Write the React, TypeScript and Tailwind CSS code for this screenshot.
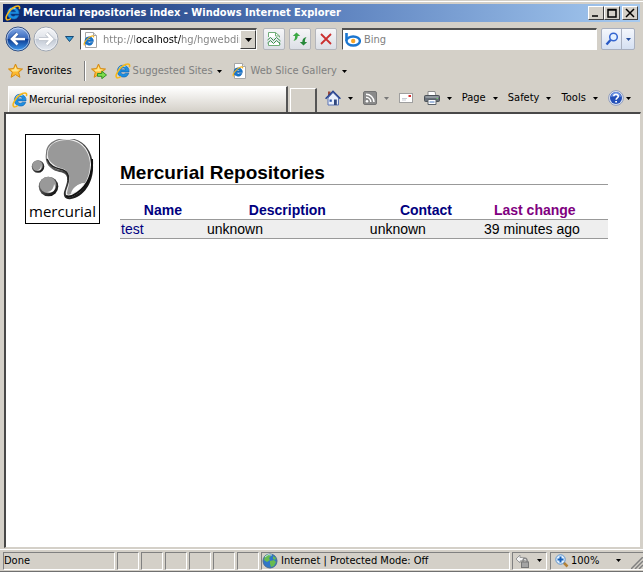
import React from 'react';

const ui = "font-['DejaVu_Sans_Condensed','DejaVu_Sans',sans-serif]";

function Caret({ className = 'text-black' }: { className?: string }) {
  return (
    <svg viewBox="0 0 5 3" className={`h-[3px] w-[5px] shrink-0 ${className}`} aria-hidden="true">
      <path d="M0 0h5L2.500 3z" fill="currentColor" />
    </svg>
  );
}

function IELogo({ className = 'size-4' }: { className?: string }) {
  return (
    <svg viewBox="0 0 16 16" className={`shrink-0 ${className}`} aria-hidden="true">
      <path
        d="M8.200 2.200a5.900 5.900 0 1 0 5.600 8h-3.500c-1.300 1.700-4.300 1-4.500-1.300h8.300A6 6 0 0 0 8.200 2.200zM5.900 6.800c.4-2.400 4.300-2.500 4.700 0z"
        fill="#1d8fe0"
        stroke="#0c5cb0"
        strokeWidth=".6"
        fillRule="evenodd"
      />
      <path d="M4 5.600C5.300 3.600 8 2.800 10.500 3.500" fill="none" stroke="#8fdcff" strokeWidth="1.100" />
      <path
        d="M1.900 14.700C-.8 12.600 4.400 4.200 10.500 1.600c2.800-1.200 4.600-.6 4 1.900"
        fill="none"
        stroke="#f5b81c"
        strokeWidth="1.600"
        strokeLinecap="round"
      />
      <path d="M1.900 14.700c1 .5 2.500-.2 4-1.300" fill="none" stroke="#f5b81c" strokeWidth="1.200" />
    </svg>
  );
}

function IEPage() {
  return (
    <svg viewBox="0 0 16 16" className="size-4 shrink-0" aria-hidden="true">
      <path d="M2.500.5h8l3 3v12h-11z" fill="#fff" stroke="#a6a6a6" />
      <path d="M10.500.5v3h3" fill="#e4e4e4" stroke="#a6a6a6" />
      <path
        d="M6 4.800a4.200 4.200 0 1 0 4 5.700H7.600c-1 1-2.800.5-2.900-.9h5.700A4.200 4.200 0 0 0 6 4.800zM4.700 8.100c.3-1.500 2.700-1.600 3 0z"
        fill="#1677cf"
        stroke="#0b57a5"
        strokeWidth=".5"
        fillRule="evenodd"
      />
      <path d="M1.500 13.400C0 11.500 4 6 8.200 4.200c1.600-.6 2.800-.2 2.300 1.200" fill="none" stroke="#f2b21b" strokeWidth="1.200" />
    </svg>
  );
}

function Star({ arrow = false }: { arrow?: boolean }) {
  return (
    <svg viewBox="0 0 16 16" className="size-4 shrink-0" aria-hidden="true">
      <path
        d="M7.500 1l2 4.600 5 .4-3.800 3.300 1.200 5-4.400-2.700-4.400 2.700 1.200-5L.5 6l5-.4z"
        fill="#fcb92f"
        stroke="#d58a12"
        strokeLinejoin="round"
      />
      <path d="M7.500 3l1.300 3.300 3.200.3-2.700 2-4.600-.2L3 6.700l3.200-.4z" fill="#ffe58c" />
      {arrow && (
        <path d="M6.500 10.500h4.300V8.200L15.500 12l-4.700 3.700v-2.400H6.500z" fill="#7ddc4c" stroke="#278c22" strokeWidth=".9" />
      )}
    </svg>
  );
}

function Round({ forward = false }: { forward?: boolean }) {
  return (
    <button aria-label={forward ? 'Forward' : 'Back'} className="shrink-0">
      <svg viewBox="0 0 26 26" className="size-[26px]">
        <defs>
          <linearGradient id={forward ? 'fwd' : 'back'} x1="0" y1="0" x2="0" y2="1">
            <stop offset="0" stopColor={forward ? '#f7f8fa' : '#8cafe8'} />
            <stop offset=".48" stopColor={forward ? '#dfe3e9' : '#3668bd'} />
            <stop offset=".52" stopColor={forward ? '#c3cad5' : '#0d3d94'} />
            <stop offset="1" stopColor={forward ? '#e9edf3' : '#3f9cf2'} />
          </linearGradient>
        </defs>
        <circle cx="13" cy="13" r="12" fill={`url(#${forward ? 'fwd' : 'back'})`} stroke={forward ? '#9da5b1' : '#334e80'} />
        <circle cx="13" cy="13" r="11" fill="none" stroke="#fff" strokeOpacity=".5" />
        <path
          d={forward ? 'M6 13h13M13.500 7.500L19 13l-5.500 5.500' : 'M20 13H7M12.500 7.500L7 13l5.500 5.500'}
          fill="none"
          stroke={forward ? '#b2b9c3' : '#244f9a'}
          strokeWidth="4"
        />
        <path
          d={forward ? 'M6 13h13M13.500 7.500L19 13l-5.500 5.500' : 'M20 13H7M12.500 7.500L7 13l5.500 5.500'}
          fill="none"
          stroke="#fff"
          strokeWidth="2.600"
        />
      </svg>
    </button>
  );
}

function NavButton({ label, children }: { label: string; children: React.ReactNode }) {
  return (
    <button
      aria-label={label}
      className="flex size-[22px] shrink-0 items-center justify-center rounded-[2px] border border-[#b4b6bb] bg-linear-to-b from-[#f6f6f8] to-[#dcdfe6]"
    >
      {children}
    </button>
  );
}

function CaptionButton({ label, d, gap = false }: { label: string; d: string; gap?: boolean }) {
  return (
    <button
      aria-label={label}
      className={`flex h-3.5 w-4 items-center justify-center border border-t-white border-r-[#404040] border-b-[#404040] border-l-white bg-[#d4d0c8] ${gap ? 'ml-0.5' : ''}`}
    >
      <svg viewBox="0 0 10 10" className="size-2.5 shrink-0">
        <path d={d} fill="none" stroke="#000" strokeWidth="1.500" />
      </svg>
    </button>
  );
}

function Pane({ className = '', children }: { className?: string; children?: React.ReactNode }) {
  return (
    <div
      className={`flex h-[18px] items-center border border-t-[#808080] border-r-white border-b-white border-l-[#808080] ${className}`}
    >
      {children}
    </div>
  );
}

function HomeIcon() {
  return (
    <svg viewBox="0 0 16 16" className="size-4" aria-hidden="true">
      <path d="M3 1.500h2.500V5H3z" fill="#9b4a3c" />
      <path d="M3 8l5-5.500L13.500 8v7H3z" fill="#e9effb" stroke="#5873b5" />
      <path d="M.6 8.700L8 1.200l7.400 7.500" fill="none" stroke="#24408f" strokeWidth="1.500" />
      <path d="M4.500 9.500h2.300v2.300H4.500z" fill="#2d55a8" />
      <path d="M9 9.500h2.800V15H9z" fill="#30477d" />
    </svg>
  );
}

function FeedIcon() {
  return (
    <svg viewBox="0 0 14 14" className="size-3.5" aria-hidden="true">
      <rect x=".5" y=".5" width="13" height="13" rx="1.500" fill="#8a8a8a" stroke="#747474" />
      <circle cx="4" cy="10.200" r="1.300" fill="#fff" />
      <path d="M3 6.300A4.800 4.800 0 0 1 7.800 11M3 3.200a8 8 0 0 1 8 7.800" fill="none" stroke="#fff" strokeWidth="1.500" />
    </svg>
  );
}

function MailIcon() {
  return (
    <svg viewBox="0 0 14 10" className="h-2.5 w-3.5" aria-hidden="true">
      <rect x=".5" y=".5" width="13" height="9" fill="#fff" stroke="#9f9f9f" />
      <path d="M9.500 2h2.500v2H9.500z" fill="#d42e2e" />
      <path d="M3 5.500h5M3 7h4" stroke="#c9ccd4" />
    </svg>
  );
}

function PrintIcon() {
  return (
    <svg viewBox="0 0 16 16" className="size-4" aria-hidden="true">
      <path d="M4 1.500h7l1 4.500H4z" fill="#fff" stroke="#8d8d8d" />
      <rect x=".5" y="5.500" width="15" height="6" rx="1" fill="#687079" stroke="#4a5057" />
      <path d="M1.500 7h13" stroke="#bcc2c8" />
      <path d="M4 9.500h8v5H4z" fill="#fff" stroke="#5a626b" />
      <path d="M5.500 12h5" stroke="#4a78bd" />
      <path d="M12.500 8.500h1.500" stroke="#6fd06f" />
    </svg>
  );
}

function HelpIcon() {
  return (
    <svg viewBox="0 0 16 16" className="size-4" aria-hidden="true">
      <circle cx="8" cy="8" r="7.400" fill="#dfe6f4" stroke="#8f9cbb" />
      <circle cx="8" cy="8" r="6" fill="#2450b8" />
      <path d="M3 7a5 5 0 0 1 10 0c-3-1.500-7-1.500-10 0z" fill="#6c92e2" />
      <path d="M5.800 6.300c0-2.800 4.600-2.700 4.500 0C10.300 7.900 8.100 7.800 8.100 9.700" fill="none" stroke="#fff" strokeWidth="1.600" />
      <path d="M7.200 10.900H9v1.600H7.200z" fill="#fff" />
    </svg>
  );
}

function MercurialMark() {
  return (
    <svg viewBox="0 0 70 64" className="h-16 w-[70px]" aria-hidden="true">
      <defs>
        <linearGradient id="rim" x1="0" y1="0" x2="1" y2="1">
          <stop offset="0" stopColor="#888" />
          <stop offset=".5" stopColor="#444" />
          <stop offset="1" stopColor="#000" />
        </linearGradient>
      </defs>
      <path
        d="M18 14C18 4 28-1 39-1 54-1 64 10 65 26 66 43 56 58 43 60 38 61 35 58 36 53 38 46 41 41 38 36 35 32 28 34 23 29 18 25 17 20 18 14z"
        fill="url(#rim)"
      />
      <path
        d="M19 15C19 6 28 0 39 0 53 0 62 10 63 25 64 41 55 54 43 58 39 59 37 56 38 52 40 46 43 40 40 35 36 30 29 32 24 27 20 24 18 20 19 15z"
        fill="#eee"
      />
      <path
        d="M20 13C21 5 29 1 39 1 51 1 61 10 62 24 62 33 60 39 57 44 52 44 47 47 45 52 43 56 39 57 39 54 40 48 43 41 40 34 37 28 30 30 25 25 21 22 19 18 20 13z"
        fill="#999"
      />
      <path d="M43 54c2-6 7-9 13-10-3 6-7 9-13 10z" fill="#fff" />
      <path d="M64 20c1 14-4 27-15 34-4 3-8 4-11 3" fill="none" stroke="#111" strokeWidth="2" />
      <path d="M19 20c3 8 9 9 16 11 5 2 6 6 5 10" fill="none" stroke="#222" strokeWidth="1.500" />
      <circle cx="10" cy="27.500" r="6.300" fill="url(#rim)" />
      <circle cx="9.500" cy="26.700" r="5.200" fill="#999" />
      <path d="M9 31c3 0 4-2 4-5 1 4-1 6-4 5z" fill="#fff" />
      <circle cx="20.500" cy="47.500" r="9.800" fill="url(#rim)" />
      <circle cx="20" cy="46" r="8.300" fill="#999" />
      <path d="M19 53c5 0 7-5 7-8 3 5-1 10-7 8z" fill="#fff" />
    </svg>
  );
}

function CommandMenu({ label, icon, muted = false }: { label: string; icon?: React.ReactNode; muted?: boolean }) {
  return (
    <button aria-label={label} className="flex items-center gap-[7px]">
      {icon ?? <span>{label}</span>}
      <Caret className={muted ? 'text-[#777]' : 'text-black'} />
    </button>
  );
}

export default function App() {
  return (
    <div
      className={`flex h-screen flex-col overflow-hidden border-b border-[#707070] bg-[#d4d0c8] text-[11px] leading-4 whitespace-nowrap text-black ${ui}`}
    >
      <header>
        <div className="h-1 border-t border-[#d4d0c8]">
          <div className="h-px bg-white" />
        </div>
        <div className="mx-[3px] flex h-[18px] items-center gap-0.5 bg-linear-to-r from-[#0a246a] via-[#5b80bd] via-50% to-[#a6caf0] pr-0.5 pl-0.5">
          <IELogo />
          <h1 className="flex-1 font-bold text-white">Mercurial repositories index - Windows Internet Explorer</h1>
          <div className="flex">
            <CaptionButton label="Minimize" d="M1 8h6" />
            <CaptionButton label="Maximize" d="M1 1.500h8v7.500H1zM1 2h8" />
            <CaptionButton label="Close" d="M1 1l8 8M9 1L1 9" gap />
          </div>
        </div>

        <div className="flex h-[34px] items-center pr-2 pl-[5px]">
          <div className="flex gap-0.5">
            <Round />
            <Round forward />
          </div>
          <button aria-label="Recent pages" className="ml-0.5 flex w-4 justify-center">
            <svg viewBox="0 0 9 6" className="h-1.5 w-[9px]">
              <path d="M.5.5h8L4.500 5.500z" fill="#359bd5" stroke="#164a78" />
            </svg>
          </button>
          <div className="ml-[3px] flex h-[22px] w-[177px] items-center border border-t-2 border-t-[#505050] border-r-white border-b-white border-l-[#505050] bg-white pl-0.5">
            <IEPage />
            <input
              aria-label="Address"
              readOnly
              value="http://localhost/hg/hgwebdir.cgi"
              className="ml-1 min-w-0 flex-1 bg-[linear-gradient(90deg,#808080_33px,#000_33px,#000_78px,#808080_78px)] bg-clip-text text-transparent outline-none"
            />
            <button
              aria-label="Show address history"
              className="flex h-full w-4 items-center justify-center border border-t-white border-r-[#404040] border-b-[#404040] border-l-white bg-[#d4d0c8]"
            >
              <svg viewBox="0 0 7 4" className="h-1 w-[7px]">
                <path d="M0 0h7L3.500 4z" />
              </svg>
            </button>
          </div>
          <div className="ml-1.5 flex gap-1">
            <NavButton label="Compatibility view">
              <svg viewBox="0 0 14 16" className="h-4 w-3.5">
                <path d="M1.500 6V1.500h7l4 3.500v1.500M1.500 12v2.500h11V11" fill="#fff" stroke="#70ad78" />
                <path d="M8.500 1.500V5h4" fill="none" stroke="#70ad78" />
                <path d="M.5 9l3-2.500 3 3 3-3 4 3.500M.5 12l3-2.500 3 3 3-3 4 3.500" fill="none" stroke="#36914a" />
              </svg>
            </NavButton>
            <NavButton label="Refresh">
              <svg viewBox="0 0 16 16" className="size-4">
                <path d="M4.500 10L.8 6.500h2.500C3.300 4 4.500 2.200 7.500 1.500 6.300 3 5.900 4.500 5.900 6.500h2.300z" fill="#3ca944" transform="rotate(180 4.500 5.750)" />
                <path d="M4.500 10L.8 6.500h2.500C3.300 4 4.500 2.200 7.500 1.500 6.300 3 5.900 4.500 5.900 6.500h2.300z" fill="#26883a" transform="translate(7 4.500)" />
              </svg>
            </NavButton>
            <NavButton label="Stop">
              <svg viewBox="0 0 12 12" className="size-3">
                <path d="M1 1l10 10M11 1L1 11" fill="none" stroke="#cb3030" strokeWidth="1.800" />
              </svg>
            </NavButton>
          </div>
          <div className="ml-[5px] flex h-[22px] min-w-0 flex-1 items-center border border-t-2 border-t-[#505050] border-r-white border-b-white border-l-[#505050] bg-white pl-0.5">
            <svg viewBox="0 0 16 16" className="size-4 shrink-0" aria-hidden="true">
              <path d="M1.500 1v8" fill="none" stroke="#1b76d0" strokeWidth="2.600" />
              <ellipse cx="8.200" cy="9" rx="6.700" ry="4.500" fill="#fff" stroke="#1b76d0" strokeWidth="2.400" />
              <circle cx="8.200" cy="9" r="2.200" fill="#f7a526" />
            </svg>
            <input
              aria-label="Search"
              placeholder="Bing"
              className="ml-[3px] min-w-0 flex-1 outline-none placeholder:text-[#808080] placeholder:opacity-100"
            />
          </div>
          <div className="ml-1 flex h-[22px] rounded-[2px] border border-[#a9b0bf] bg-linear-to-b from-[#f4f7fc] to-[#d5e0f2]">
            <button aria-label="Search the web" className="flex w-5 items-center justify-center border-r border-[#a9b0bf]">
              <svg viewBox="0 0 14 14" className="size-3.5">
                <path d="M1.500 12.500l4-4.500" stroke="#2758c5" strokeWidth="2.300" />
                <circle cx="8.500" cy="5" r="3.800" fill="#e3f1ff" stroke="#3566d0" strokeWidth="1.500" />
              </svg>
            </button>
            <button aria-label="Search options" className="flex w-3 items-center justify-center">
              <Caret className="text-[#28509e]" />
            </button>
          </div>
        </div>

        <nav aria-label="Favorites bar" className="flex h-[30px] items-center pl-2">
          <button className="flex items-center gap-[3px]">
            <Star />
            Favorites
          </button>
          <div className="mr-[5px] ml-3 h-5 border-r border-l border-r-white border-l-[#808080]" />
          <button aria-label="Add to favorites bar">
            <Star arrow />
          </button>
          <button className="ml-2 flex items-center gap-0.5 text-[#808080]">
            <IELogo />
            Suggested Sites
            <Caret className="ml-0.5 text-black" />
          </button>
          <button className="ml-2.5 flex items-center gap-[3px] text-[#808080]">
            <IEPage />
            Web Slice Gallery
            <Caret className="ml-0.5 text-black" />
          </button>
        </nav>

        <div className="flex h-[26px] items-end pr-3 pl-2">
          <div
            role="tab"
            aria-selected="true"
            className="flex h-[26px] w-[280px] items-center gap-px border-t border-r-2 border-l border-t-white border-r-[#555] border-l-white bg-linear-to-b from-white to-[#d4d0c8] pl-[3px]"
          >
            <IELogo />
            <span>Mercurial repositories index</span>
          </div>
          <button
            aria-label="New tab"
            className="ml-0.5 h-6 w-[27px] border-t border-r-2 border-l border-t-white border-r-[#555] border-l-white"
          />
          <div className="flex h-full flex-1 items-center justify-between pb-0.5 pl-2">
            <CommandMenu label="Home" icon={<HomeIcon />} />
            <CommandMenu label="Feeds" icon={<FeedIcon />} muted />
            <button aria-label="Read mail">
              <MailIcon />
            </button>
            <CommandMenu label="Print" icon={<PrintIcon />} />
            <CommandMenu label="Page" />
            <CommandMenu label="Safety" />
            <CommandMenu label="Tools" />
            <button aria-label="Help" className="flex items-center gap-0.5">
              <HelpIcon />
              <Caret />
            </button>
          </div>
        </div>
      </header>

      <main className="mr-0.5 ml-1 min-h-0 flex-1 border-t-2 border-r border-b border-l-2 border-t-[#484848] border-r-[#d4d0c8] border-b-[#d4d0c8] border-l-[#484848] bg-white font-['Liberation_Sans',Arial,sans-serif] text-sm leading-[18px]">
        <div className="flex items-start gap-5 pt-5 pr-8 pl-[19px]">
          <a
            href="#mercurial"
            className="flex h-[90px] w-[75px] shrink-0 flex-col items-center border border-black pt-1 font-['Open_Sans',sans-serif] text-[15px] leading-4"
          >
            <MercurialMark />
            <span>mercurial</span>
          </a>
          <div className="min-w-0 flex-1 pt-7">
            <h2 className="border-b border-[#999] text-[19px] leading-[22px] font-bold">Mercurial Repositories</h2>
            <table className="mt-4 w-full table-fixed border-collapse text-left">
              <colgroup>
                <col className="w-[17.600%]" />
                <col className="w-[33.400%]" />
                <col className="w-[23.400%]" />
                <col className="w-[21.200%]" />
                <col />
              </colgroup>
              <thead>
                <tr className="text-center text-[#000080]">
                  <th className="p-0">
                    <a href="#name">Name</a>
                  </th>
                  <th className="p-0">
                    <a href="#description">Description</a>
                  </th>
                  <th className="p-0">
                    <a href="#contact">Contact</a>
                  </th>
                  <th className="p-0">
                    <a href="#lastchange" className="text-[#800080]">
                      Last change
                    </a>
                  </th>
                  <td />
                </tr>
              </thead>
              <tbody>
                <tr className="border-y border-[#999] bg-[#eee]">
                  <td className="p-0 pl-px">
                    <a href="#test" className="text-[#000080]">
                      test
                    </a>
                  </td>
                  <td className="p-0 pl-px">unknown</td>
                  <td className="p-0 pl-px">unknown</td>
                  <td className="p-0 pl-px">39 minutes ago</td>
                  <td />
                </tr>
              </tbody>
            </table>
          </div>
        </div>
      </main>

      <footer className="mt-px flex h-[22px] items-center gap-0.5 border-t border-white pl-[3px]">
        <Pane className="w-[112px]">Done</Pane>
        <Pane className="w-[22px]" />
        <Pane className="w-[22px]" />
        <Pane className="w-[22px]" />
        <Pane className="w-[22px]" />
        <Pane className="w-[22px]" />
        <Pane className="w-[22px]" />
        <Pane className="min-w-0 flex-1 gap-[3px]">
          <svg viewBox="0 0 16 16" className="size-4 shrink-0" aria-hidden="true">
            <circle cx="8" cy="8" r="7" fill="#2f76c8" stroke="#466b92" />
            <path d="M3 3c3-2 5-2 6 0L7 5l1 2-3 2-3-2zM8 8l4-1 2 2-2 4-3 1-1-3zM11 3l3 2-1 2-2-1z" fill="#67bb50" />
            <path d="M3 4a6 6 0 0 1 7-2" fill="none" stroke="#c6e7f7" />
          </svg>
          <span>Internet | Protected Mode: Off</span>
        </Pane>
        <Pane className="w-[35px] justify-between pr-1 pl-0.5">
          <svg viewBox="0 0 16 16" className="size-4 shrink-0" aria-hidden="true">
            <path d="M1 6l4-4v2.500c4-.5 7 1 8 4l-4-1-4 .5V10z" fill="#f3f3f3" stroke="#999" />
            <path d="M8 9V7.500c0-3 4-3 4 0V9" fill="none" stroke="#888" strokeWidth="1.300" />
            <rect x="6.500" y="9" width="7" height="5.500" fill="#a4a4a4" stroke="#777" />
          </svg>
          <button aria-label="Privacy options">
            <Caret />
          </button>
        </Pane>
        <Pane className="ml-px w-[93px] border-r-0 pl-1">
          <svg viewBox="0 0 14 14" className="size-3.5 shrink-0" aria-hidden="true">
            <path d="M8.500 8.500l4 4" stroke="#b38136" strokeWidth="2.500" />
            <circle cx="5.500" cy="5.500" r="4.700" fill="#e1f0ff" stroke="#5b92cc" />
            <path d="M5.500 2.500v6M2.500 5.500h6" stroke="#1761bc" strokeWidth="2" />
          </svg>
          <button className="ml-0.5 flex flex-1 items-center justify-between pr-[10px]">
            100%
            <Caret />
          </button>
          <svg viewBox="0 0 12 12" className="size-3 shrink-0 self-end" aria-hidden="true">
            <path d="M0 12L12 0M4 12l8-8M8 12l4-4" stroke="#808080" strokeWidth="1.500" />
          </svg>
        </Pane>
      </footer>
    </div>
  );
}
